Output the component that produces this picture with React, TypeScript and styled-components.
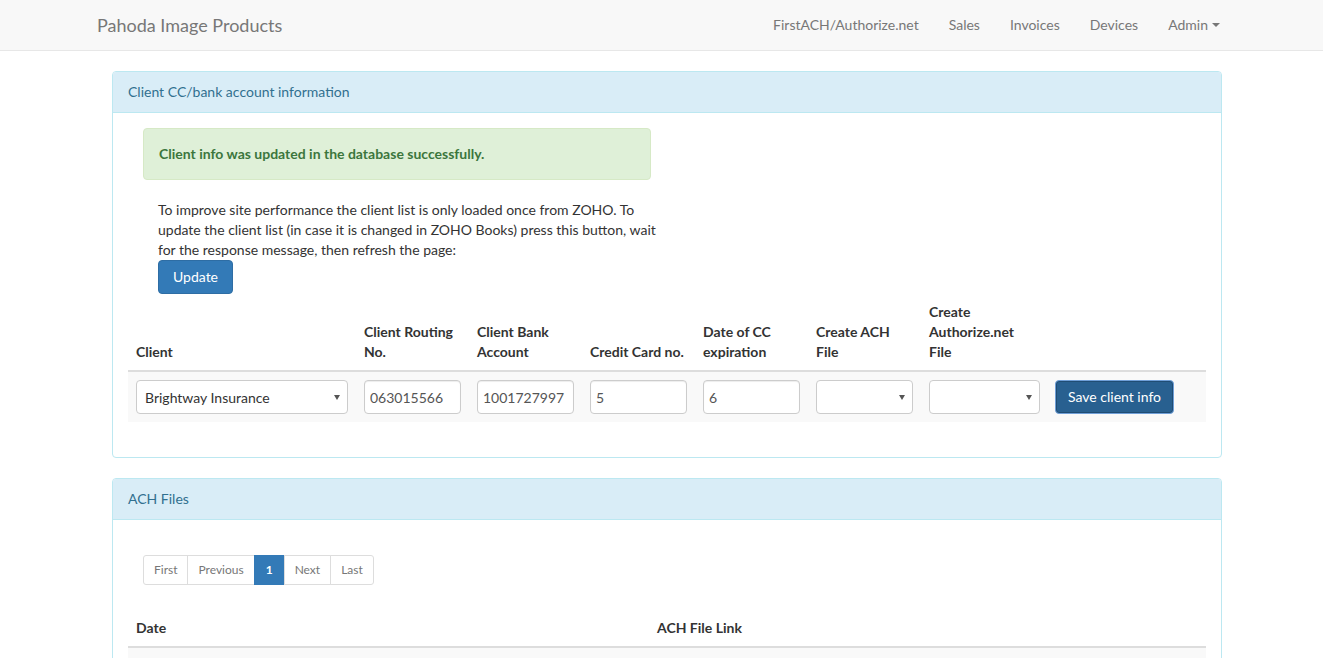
import React from "react";
import styled, { createGlobalStyle } from "styled-components";

const Global = createGlobalStyle`
  * { box-sizing: border-box; }
  html, body { margin: 0; padding: 0; background: #fff; }
  body {
    font-family: Lato, "Helvetica Neue", Helvetica, Arial, sans-serif;
    font-size: 14px;
    line-height: 1.42857;
    color: #333;
  }
`;

const Navbar = styled.nav`
  height: 51px;
  background: #f8f8f8;
  border-bottom: 1px solid #e7e7e7;
  margin-bottom: 20px;
`;

const NavInner = styled.div`
  width: 1138px;
  margin-left: 97px;
  height: 50px;
  display: flex;
  align-items: center;
  justify-content: space-between;
`;

const Brand = styled.a`
  font-size: 18px;
  line-height: 20px;
  color: #777;
  text-decoration: none;
`;

const NavList = styled.ul`
  list-style: none;
  margin: 0;
  padding: 0;
  display: flex;
`;

const NavLink = styled.a`
  display: flex;
  align-items: center;
  padding: 15px;
  line-height: 20px;
  color: #777;
  text-decoration: none;
`;

const Caret = styled.span`
  display: inline-block;
  width: 0;
  height: 0;
  margin-left: 4px;
  border-top: 4px solid #777;
  border-left: 4px solid transparent;
  border-right: 4px solid transparent;
`;

const Container = styled.main`
  width: 1110px;
  margin-left: 112px;
`;

const Panel = styled.section`
  background: #fff;
  border: 1px solid #bce8f1;
  border-radius: 4px;
  margin-bottom: 20px;
`;

const PanelHeading = styled.div`
  background: #d9edf7;
  color: #31708f;
  border-bottom: 1px solid #bce8f1;
  border-radius: 3px 3px 0 0;
  padding: 10px 15px;
  line-height: 20px;
  font-size: 14px;
`;

const PanelBody = styled.div`
  padding: 15px;
`;

const Inset = styled.div`
  padding: 0 15px;
`;

const Alert = styled.div`
  width: 508px;
  padding: 15px;
  background: #dff0d8;
  border: 1px solid #d6e9c6;
  border-radius: 4px;
  color: #3c763d;
  font-weight: bold;
  line-height: 20px;
  margin-bottom: 20px;
`;

const Note = styled.p`
  width: 512px;
  margin: 0 0 0 30px;
  line-height: 20px;
`;

const Btn = styled.button<{ $dark?: boolean }>`
  display: inline-block;
  height: 34px;
  padding: ${(p) => (p.$dark ? "6px 12px" : "6px 14px")};
  font-family: inherit;
  font-size: 14px;
  line-height: 20px;
  color: #fff;
  background: ${(p) => (p.$dark ? "#286090" : "#337ab7")};
  border: 1px solid ${(p) => (p.$dark ? "#6f9fd8" : "#2e6da4")};
  box-shadow: ${(p) => (p.$dark ? "inset 0 0 0 1px #204d74" : "none")};
  border-radius: 4px;
  cursor: pointer;
`;

const UpdateRow = styled.div`
  margin-left: 30px;
  height: 34px;
`;

const Table = styled.table`
  width: 100%;
  border-collapse: collapse;
  border-spacing: 0;
  table-layout: fixed;
`;

const Th = styled.th`
  text-align: left;
  vertical-align: bottom;
  padding: 8px;
  line-height: 20px;
  font-weight: bold;
  border-bottom: 2px solid #ddd;
`;

const Tr = styled.tr<{ $striped?: boolean }>`
  background: ${(p) => (p.$striped ? "#f9f9f9" : "transparent")};
`;

const Td = styled.td`
  padding: 8px;
  vertical-align: top;
  line-height: 20px;
`;

const Input = styled.input<{ $w: number }>`
  width: ${(p) => p.$w}px;
  height: 34px;
  padding: 6px 5px;
  font-family: inherit;
  font-size: 14px;
  color: #555;
  background: #fff;
  border: 1px solid #ccc;
  border-radius: 4px;
  box-shadow: inset 0 1px 1px rgba(0, 0, 0, 0.075);
  outline: none;
`;

const SelectWrap = styled.div<{ $w: number }>`
  position: relative;
  width: ${(p) => p.$w}px;
  &::after {
    content: "";
    position: absolute;
    right: 8px;
    top: 15px;
    border-top: 5px solid #555;
    border-left: 3.5px solid transparent;
    border-right: 3.5px solid transparent;
    pointer-events: none;
  }
`;

const Select = styled.select`
  appearance: none;
  -webkit-appearance: none;
  width: 100%;
  height: 34px;
  padding: 6px 8px;
  font-family: inherit;
  font-size: 14px;
  color: #333;
  background: #fff;
  border: 1px solid #ccc;
  border-radius: 4px;
  outline: none;
`;

const Pagination = styled.ul`
  display: inline-flex;
  list-style: none;
  margin: 20px 0 25px 15px;
  padding: 0;
`;

const PageItem = styled.li<{ $active?: boolean }>`
  padding: 5px ${(p) => (p.$active ? "11px" : "10px")};
  font-size: 12px;
  line-height: 18px;
  color: ${(p) => (p.$active ? "#fff" : "#777")};
  background: ${(p) => (p.$active ? "#337ab7" : "#fff")};
  font-weight: ${(p) => (p.$active ? "bold" : "normal")};
  border: 1px solid ${(p) => (p.$active ? "#337ab7" : "#ddd")};
  margin-left: -1px;
  &:first-child {
    margin-left: 0;
    border-radius: 3px 0 0 3px;
  }
  &:last-child {
    border-radius: 0 3px 3px 0;
  }
`;

const BodyCell = styled.td`
  height: 20px;
`;

const columns = [
  { label: "Client", w: 228 },
  { label: "Client Routing No.", w: 113 },
  { label: "Client Bank Account", w: 113 },
  { label: "Credit Card no.", w: 113 },
  { label: "Date of CC expiration", w: 113 },
  { label: "Create ACH File", w: 113 },
  { label: "Create Authorize.net File", w: 126 },
  { label: "", w: 159 },
];

export default function App() {
  return (
    <>
      <Global />
      <Navbar>
        <NavInner>
          <Brand>Pahoda Image Products</Brand>
          <NavList>
            <li><NavLink>FirstACH/Authorize.net</NavLink></li>
            <li><NavLink>Sales</NavLink></li>
            <li><NavLink>Invoices</NavLink></li>
            <li><NavLink>Devices</NavLink></li>
            <li><NavLink>Admin <Caret /></NavLink></li>
          </NavList>
        </NavInner>
      </Navbar>
      <Container>
        <Panel>
          <PanelHeading>Client CC/bank account information</PanelHeading>
          <PanelBody>
            <Inset>
              <Alert>Client info was updated in the database successfully.</Alert>
            </Inset>
            <Note>
              To improve site performance the client list is only loaded once from ZOHO. To
              update the client list (in case it is changed in ZOHO Books) press this button, wait
              for the response message, then refresh the page:
            </Note>
            <UpdateRow>
              <Btn>Update</Btn>
            </UpdateRow>
            <Table>
              <colgroup>
                {columns.map((c, i) => (
                  <col key={i} style={{ width: c.w }} />
                ))}
              </colgroup>
              <thead>
                <tr>
                  {columns.map((c, i) => (
                    <Th key={i}>{c.label}</Th>
                  ))}
                </tr>
              </thead>
              <tbody>
                <Tr $striped>
                  <Td>
                    <SelectWrap $w={212}>
                      <Select defaultValue="bw">
                        <option value="bw">Brightway Insurance</option>
                      </Select>
                    </SelectWrap>
                  </Td>
                  <Td><Input $w={97} defaultValue="063015566" /></Td>
                  <Td><Input $w={97} defaultValue="1001727997" /></Td>
                  <Td><Input $w={97} defaultValue="5" /></Td>
                  <Td><Input $w={97} defaultValue="6" /></Td>
                  <Td>
                    <SelectWrap $w={97}>
                      <Select defaultValue=""><option value=""></option></Select>
                    </SelectWrap>
                  </Td>
                  <Td>
                    <SelectWrap $w={111}>
                      <Select defaultValue=""><option value=""></option></Select>
                    </SelectWrap>
                  </Td>
                  <Td><Btn $dark>Save client info</Btn></Td>
                </Tr>
              </tbody>
            </Table>
            <div style={{ height: 20 }} />
          </PanelBody>
        </Panel>
        <Panel>
          <PanelHeading>ACH Files</PanelHeading>
          <PanelBody>
            <Pagination>
              <PageItem>First</PageItem>
              <PageItem>Previous</PageItem>
              <PageItem $active>1</PageItem>
              <PageItem>Next</PageItem>
              <PageItem>Last</PageItem>
            </Pagination>
            <Table>
              <colgroup>
                <col style={{ width: 521 }} />
                <col />
              </colgroup>
              <thead>
                <tr>
                  <Th>Date</Th>
                  <Th>ACH File Link</Th>
                </tr>
              </thead>
              <tbody>
                <Tr $striped>
                  <BodyCell />
                  <BodyCell />
                </Tr>
                <Tr>
                  <BodyCell />
                  <BodyCell />
                </Tr>
              </tbody>
            </Table>
          </PanelBody>
        </Panel>
      </Container>
    </>
  );
}
